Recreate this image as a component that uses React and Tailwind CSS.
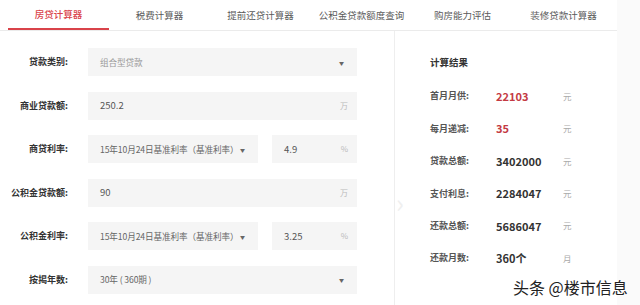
import React from "react";

const font = { fontFamily: '"Noto Sans CJK SC", "Noto Sans", sans-serif' };

const tabs = ["房贷计算器", "税费计算器", "提前还贷计算器", "公积金贷款额度查询", "购房能力评估", "装修贷款计算器"];

function Arrow() {
  return <span className="text-[5px] text-[#666] leading-none">▼</span>;
}

function Row({ label, children }) {
  return (
    <div className="flex items-center h-[28px]">
      <div className="w-[69px] text-right text-[9px] font-bold text-[#333] pr-[1px] whitespace-nowrap">{label}</div>
      <div className="ml-[19px] flex gap-[14px]">{children}</div>
    </div>
  );
}

function Select({ text, w, light }) {
  return (
    <div className={`h-[28px] ${w} bg-[#f5f5f5] flex items-center justify-between pl-[12px] pr-[13px]`}>
      <span className={`text-[8.6px] whitespace-pre tracking-[-0.1px] ${light ? "text-[#999]" : "text-[#666]"}`}>{text}</span>
      <Arrow />
    </div>
  );
}

function Input({ value, unit, w }) {
  return (
    <div className={`h-[28px] ${w} bg-[#f5f5f5] flex items-center justify-between pl-[12px] pr-[9px]`}>
      <span className="text-[9.5px] text-[#555]">{value}</span>
      <span className="text-[8px] text-[#bbb]">{unit}</span>
    </div>
  );
}

const results = [
  ["首月月供:", "22103", "元", true],
  ["每月递减:", "35", "元", true],
  ["贷款总额:", "3402000", "元", false],
  ["支付利息:", "2284047", "元", false],
  ["还款总额:", "5686047", "元", false],
  ["还款月数:", "360个", "月", false],
];

export default function App() {
  return (
    <div className="relative w-[640px] h-[305px] bg-white overflow-hidden flex" style={font}>
      <div className="w-[617px] flex flex-col">
        <div className="flex pl-[8px] h-[31px] border-b border-[#ebebeb]">
          {tabs.map((t, i) => (
            <div
              key={t}
              className={`w-[101px] flex items-center justify-center text-[9.5px] ${
                i === 0 ? "text-[#d9434a] border-b-2 border-[#d9434a] font-medium" : "text-[#5a5a5a]"
              }`}
            >
              {t}
            </div>
          ))}
        </div>
        <div className="flex flex-1">
          <div className="w-[395px] border-r border-[#eeeeee] pt-[17px] flex flex-col gap-[15.5px]">
            <Row label="贷款类别:">
              <Select text="组合型贷款" w="w-[269px]" light />
            </Row>
            <Row label="商业贷款额:">
              <Input value="250.2" unit="万" w="w-[269px]" />
            </Row>
            <Row label="商贷利率:">
              <Select text="15年10月24日基准利率（基准利率）" w="w-[170px]" />
              <Input value="4.9" unit="%" w="w-[85px]" />
            </Row>
            <Row label="公积金贷款额:">
              <Input value="90" unit="万" w="w-[269px]" />
            </Row>
            <Row label="公积金利率:">
              <Select text="15年10月24日基准利率（基准利率）" w="w-[170px]" />
              <Input value="3.25" unit="%" w="w-[85px]" />
            </Row>
            <Row label="按揭年数:">
              <Select text="30年 ( 360期 )" w="w-[269px]" />
            </Row>
          </div>
          <div className="flex-1 pl-[35px] pt-[23px]">
            <div className="h-[16px] flex items-center text-[9.5px] font-bold text-[#333]">计算结果</div>
            <div className="mt-[10px] flex flex-col">
              {results.map(([l, v, u, red]) => (
                <div key={l} className="h-[32.4px] flex items-center">
                  <span className="w-[66px] text-[9px] font-bold text-[#555]">{l}</span>
                  <span className={`w-[67px] text-[11px] font-bold ${red ? "text-[#c43a43]" : "text-[#333]"}`}>{v}</span>
                  <span className="text-[8.5px] text-[#aaa]">{u}</span>
                </div>
              ))}
            </div>
          </div>
        </div>
      </div>
      <div className="flex-1 bg-[#fafafa]" />
      <div className="absolute left-[396px] top-[189px] text-[26px] leading-none text-[#efefef]">›</div>
      <div
        className="absolute left-[513px] top-[279px] text-[16px] leading-none text-[#222]"
        style={{ textShadow: "0 0 2px #fff, 0 0 2px #fff" }}
      >
        头条 @楼市信息
      </div>
    </div>
  );
}
